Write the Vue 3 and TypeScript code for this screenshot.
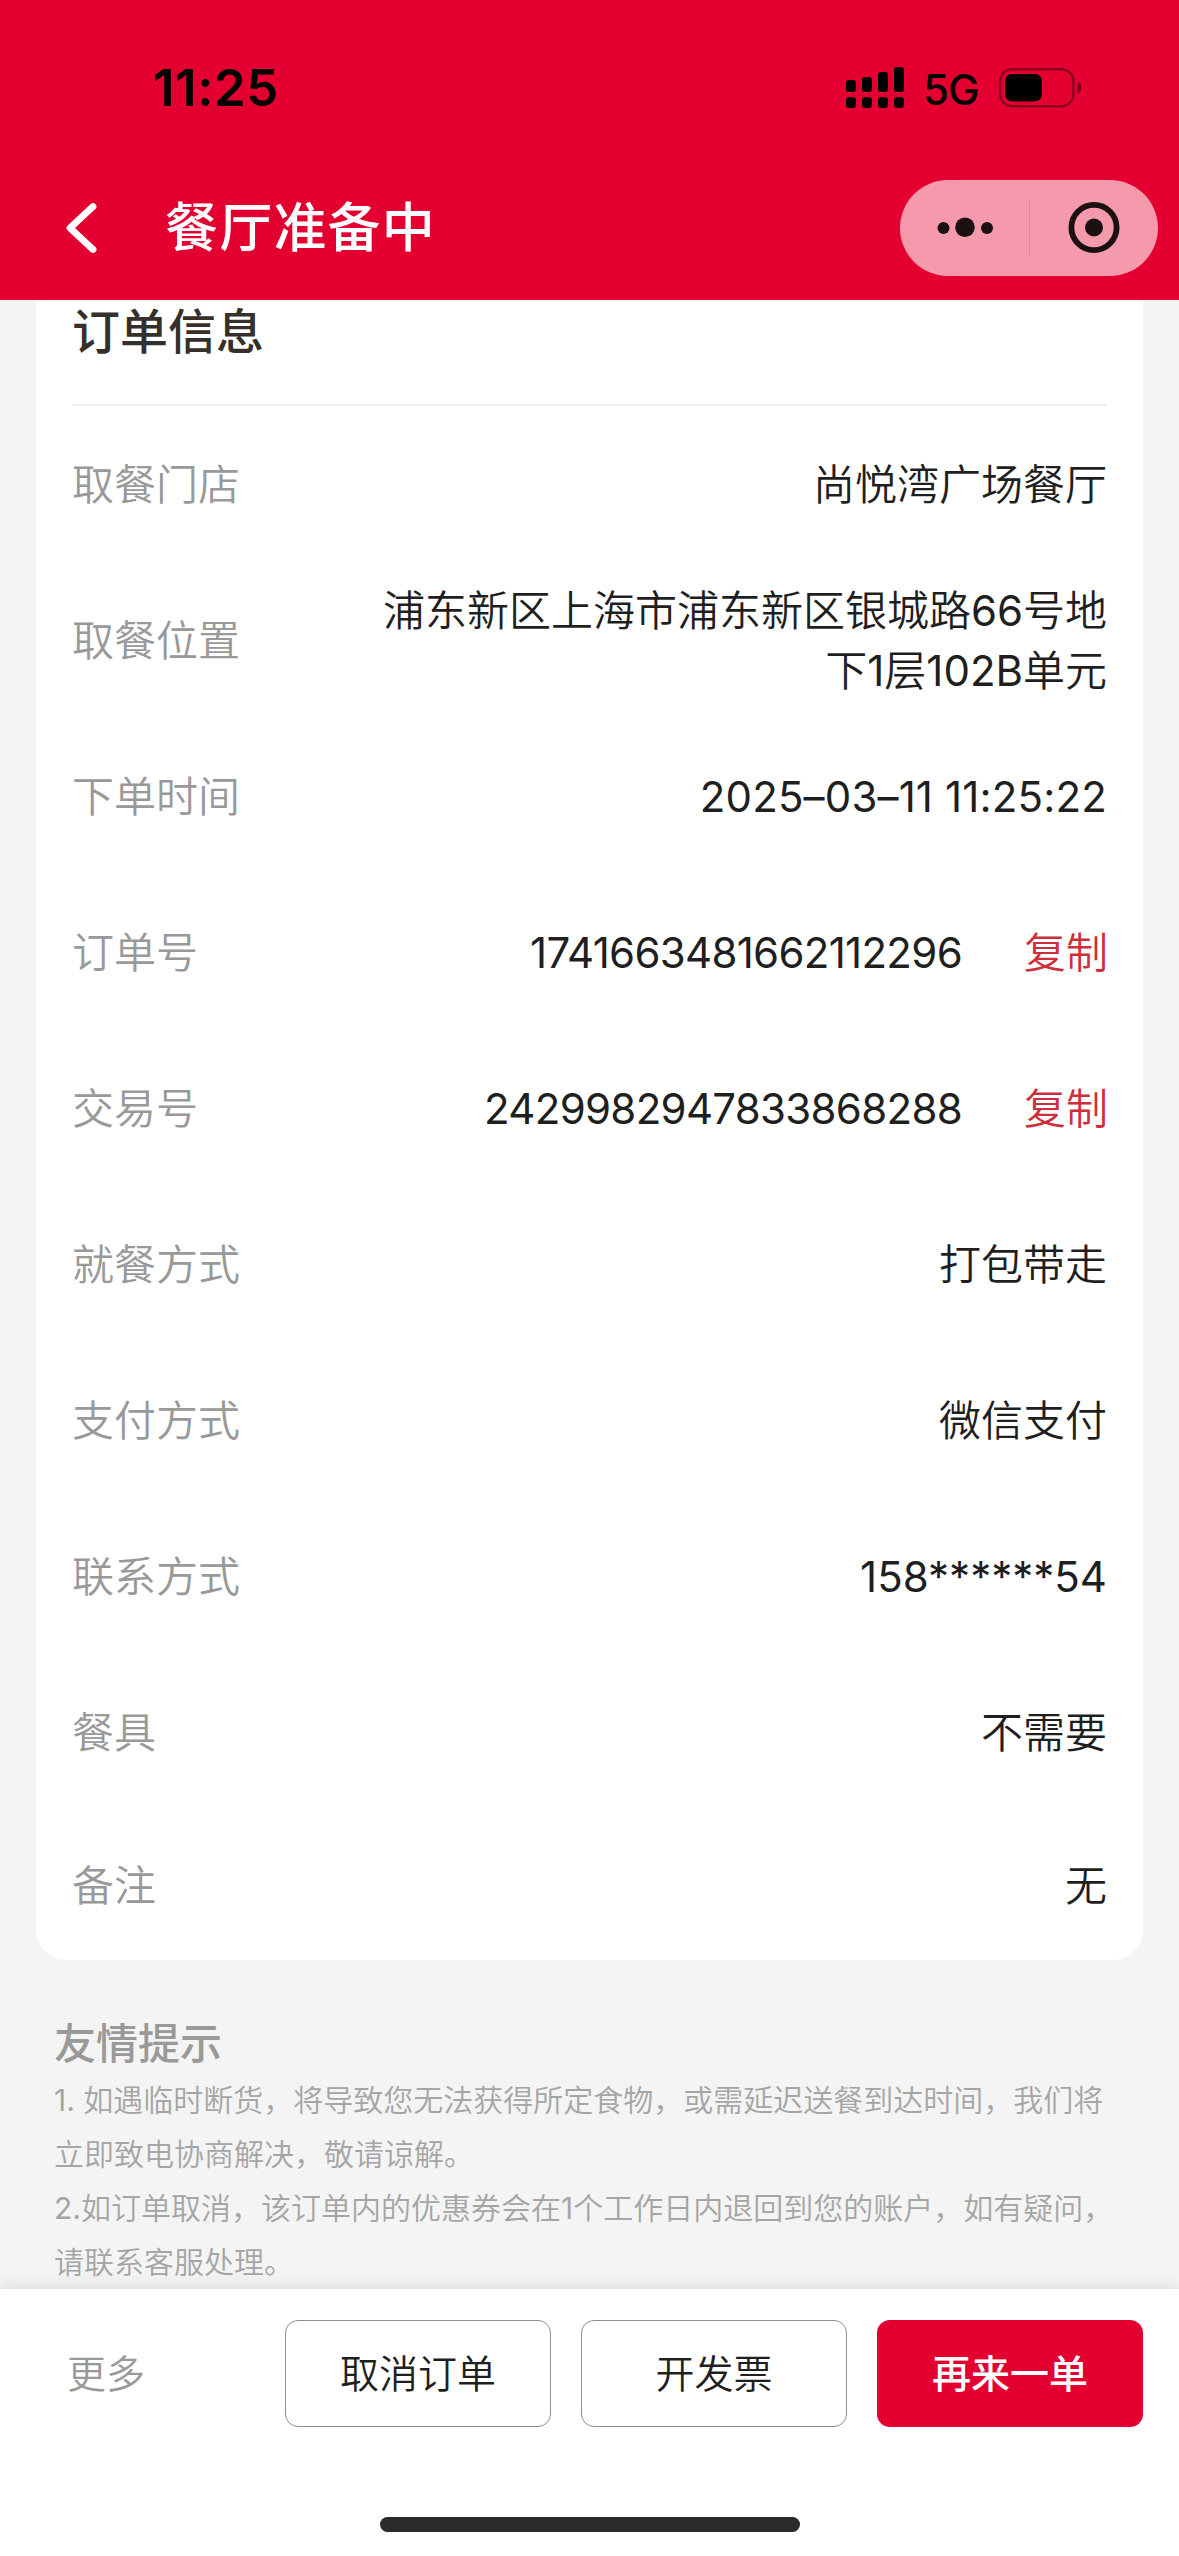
<script setup lang="ts">
interface InfoRow {
  label: string
  lines: string[]
  copyable?: boolean
  spacing?: string
}

const rows: InfoRow[] = [
  { label: '取餐门店', lines: ['尚悦湾广场餐厅'] },
  { label: '取餐位置', lines: ['浦东新区上海市浦东新区银城路66号地', '下1层102B单元'], spacing: 'mixed' },
  { label: '下单时间', lines: ['2025–03–11 11:25:22'], spacing: 'date' },
  { label: '订单号', lines: ['1741663481662112296'], copyable: true, spacing: 'number' },
  { label: '交易号', lines: ['2429982947833868288'], copyable: true, spacing: 'number' },
  { label: '就餐方式', lines: ['打包带走'] },
  { label: '支付方式', lines: ['微信支付'] },
  { label: '联系方式', lines: ['158******54'], spacing: 'phone' },
  { label: '餐具', lines: ['不需要'] },
  { label: '备注', lines: ['无'] },
]

const tips: string[] = [
  '1. 如遇临时断货，将导致您无法获得所定食物，或需延迟送餐到达时间，我们将',
  '立即致电协商解决，敬请谅解。',
  '2.如订单取消，该订单内的优惠券会在1个工作日内退回到您的账户，如有疑问，',
  '请联系客服处理。',
]
</script>

<template>
  <div class="screen">
    <header class="header">
      <div class="status">
        <span class="time">11:25</span>
        <div class="status-right">
          <svg class="signal" width="58" height="42" viewBox="0 0 58 42">
            <rect x="0" y="13" width="10" height="12" rx="3" />
            <rect x="16" y="10" width="10" height="15" rx="3" />
            <rect x="32" y="5" width="10" height="20" rx="3" />
            <rect x="48" y="0" width="10" height="25" rx="3" />
            <rect x="0" y="30" width="10" height="11" rx="3.5" />
            <rect x="16" y="30" width="10" height="11" rx="3.5" />
            <rect x="32" y="30" width="10" height="11" rx="3.5" />
            <rect x="48" y="30" width="10" height="11" rx="3.5" />
          </svg>
          <span class="network">5G</span>
          <svg class="battery" width="84" height="40" viewBox="0 0 84 40">
            <rect x="1.2" y="1.2" width="73.2" height="37" rx="12" fill="none" stroke="#000" stroke-opacity=".38" stroke-width="2.4" />
            <rect x="6" y="6" width="37" height="27.4" rx="7" />
            <path d="M78.500 13.500C81 14.800 82.200 17 82.200 19.700S81 24.600 78.500 25.900Z" fill-opacity=".45" />
          </svg>
        </div>
      </div>
      <div class="nav">
        <svg class="back" width="32" height="52" viewBox="0 0 32 52">
          <path d="M28 4.500L5 26L28 47.500" fill="none" stroke="#fff" stroke-width="6.800" stroke-linecap="round" stroke-linejoin="round" />
        </svg>
        <h1 class="title">餐厅准备中</h1>
        <div class="capsule">
          <svg width="258" height="96" viewBox="0 0 258 96">
            <g fill="#1c1012">
              <circle cx="43.500" cy="48" r="6" />
              <circle cx="65" cy="47.300" r="9.800" />
              <circle cx="87" cy="48" r="6" />
              <circle cx="194" cy="47.500" r="9" />
            </g>
            <path d="M129.500 20V76" stroke="#e0879a" stroke-width="1" />
            <circle cx="194" cy="47.500" r="22.600" fill="none" stroke="#1c1012" stroke-width="5.800" />
          </svg>
        </div>
      </div>
    </header>

    <main class="content">
      <section class="card">
        <h2 class="card-title">订单信息</h2>
        <div v-for="row in rows" :key="row.label" class="row">
          <span class="label">{{ row.label }}</span>
          <div class="value" :class="row.spacing">
            <div v-for="line in row.lines" :key="line">{{ line }}</div>
          </div>
          <span v-if="row.copyable" class="copy">复制</span>
        </div>
      </section>
      <section class="tips">
        <h3 class="tips-title">友情提示</h3>
        <p v-for="tip in tips" :key="tip" class="tip">{{ tip }}</p>
      </section>
    </main>

    <footer class="footer">
      <div class="actions">
        <span class="more">更多</span>
        <button class="btn">取消订单</button>
        <button class="btn">开发票</button>
        <button class="btn primary">再来一单</button>
      </div>
      <div class="home-indicator"></div>
    </footer>
  </div>
</template>

<style>
body {
  margin: 0;
  background: #fff;
}
</style>

<style scoped>
.screen {
  width: 1179px;
  height: 2556px;
  display: flex;
  flex-direction: column;
  overflow: hidden;
  background: #f4f4f4;
  color: #1f1f1f;
  font-family: Inter, "Noto Sans CJK SC", sans-serif;
}
h1, h2, h3, p {
  margin: 0;
}
.header {
  height: 300px;
  flex: none;
  box-sizing: border-box;
  background: #e30031;
}
.status {
  height: 180px;
  box-sizing: border-box;
  padding: 58px 96px 0 153px;
  display: flex;
  justify-content: space-between;
  align-items: flex-start;
  color: #000;
}
.time {
  font-size: 51px;
  line-height: 60px;
  font-weight: 600;
  letter-spacing: 0.5px;
}
.status-right {
  display: flex;
  align-items: flex-start;
}
.signal {
  margin-top: 9px;
}
.network {
  margin-left: 19px;
  width: 76px;
  font-size: 42px;
  line-height: 60px;
  font-weight: 500;
  letter-spacing: -1px;
  margin-top: 2px;
}
.battery {
  margin-top: 10px;
}
.nav {
  height: 96px;
  display: flex;
  align-items: center;
  padding: 0 21px 0 65px;
}
.title {
  margin-left: 68px;
  font-size: 53px;
  letter-spacing: 1.2px;
  line-height: 96px;
  font-weight: 500;
  color: #fff;
}
.capsule {
  margin-left: auto;
  width: 258px;
  height: 96px;
  border-radius: 48px;
  background: #f49aac;
}
.content {
  flex: 1;
  min-height: 0;
}
.card {
  margin: 0 36px;
  height: 1660px;
  box-sizing: border-box;
  padding: 0 36px;
  background: #fff;
  border-radius: 0 0 30px 30px;
}
.card-title {
  height: 106px;
  box-sizing: border-box;
  padding-top: 1px;
  border-bottom: 2px solid #ececec;
  font-size: 48px;
  line-height: 62px;
  font-weight: 500;
  color: #35302c;
}
.row {
  height: 156px;
  box-sizing: border-box;
  padding-top: 2px;
  display: flex;
  align-items: center;
  font-size: 42px;
  line-height: 60px;
  font-weight: 350;
}
.row:last-child {
  height: 149px;
}
.label {
  color: #999;
}
.value {
  margin-left: auto;
  text-align: right;
}
.mixed {
  font-family: Inter, "Noto Sans CJK SC DemiLight", "Noto Sans CJK SC", sans-serif;
  font-weight: 400;
}
.date {
  font-weight: 400;
  letter-spacing: 0.15px;
}
.number {
  font-weight: 400;
  letter-spacing: -0.7px;
}
.phone {
  font-weight: 400;
}
.copy {
  margin: 0 -1px 0 62px;
  color: #cb303c;
}
.tips {
  padding: 54px 54px 0;
}
.tips-title {
  font-size: 42px;
  line-height: 60px;
  font-weight: 500;
  color: #999;
}
.tip {
  position: relative;
  top: -1px;
  font-family: Inter, "Noto Sans CJK SC DemiLight", "Noto Sans CJK SC", sans-serif;
  font-size: 30px;
  line-height: 54px;
  font-weight: 400;
  color: #a5a5a5;
  white-space: nowrap;
}
.footer {
  position: relative;
  height: 267px;
  flex: none;
  box-sizing: border-box;
  padding: 31px 36px 0 67px;
  background: #fff;
  box-shadow: 0 0 18px rgba(0, 0, 0, 0.14);
  display: flex;
  flex-direction: column;
}
.actions {
  display: flex;
  align-items: center;
  gap: 30px;
}
.more {
  flex: 1;
  font-size: 39px;
  line-height: 60px;
  font-weight: 350;
  color: #999;
}
.btn {
  width: 266px;
  height: 107px;
  box-sizing: border-box;
  padding: 0;
  border: 1.5px solid #8e8e8e;
  border-radius: 13px;
  background: #fff;
  font: inherit;
  font-size: 39px;
  font-weight: 350;
  line-height: 60px;
  color: #1f1f1f;
}
.primary {
  border: 0;
  background: #e30031;
  color: #fff;
  font-weight: 500;
}
.home-indicator {
  width: 420px;
  height: 15px;
  margin: 90px 0 0 313px;
  border-radius: 8px;
  background: #2a2a2a;
}
</style>
